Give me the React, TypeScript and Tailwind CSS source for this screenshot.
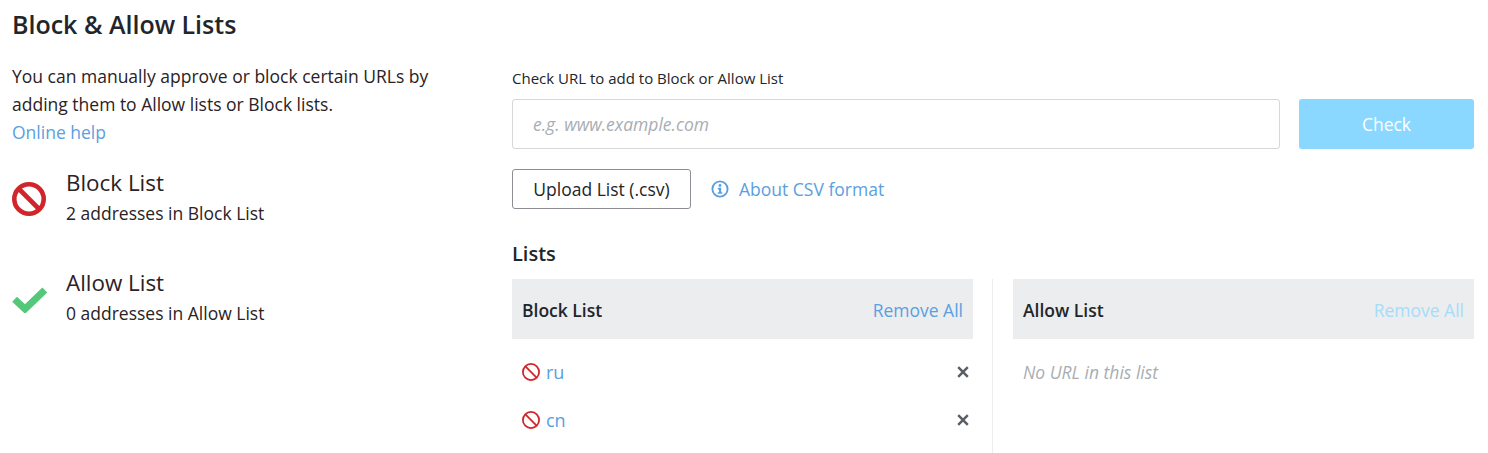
const font = { fontFamily: '"Open Sans", sans-serif' };

const BlockIcon = ({ size, stroke }: { size: number; stroke: number }) => (
  <svg width={size} height={size} viewBox="0 0 34 34" fill="none" className="shrink-0">
    <circle cx="17" cy="17" r={17 - stroke / 2} stroke="#d0262b" strokeWidth={stroke} />
    <path d="M6 6L28 28" stroke="#d0262b" strokeWidth={stroke} />
  </svg>
);

const CheckIcon = () => (
  <svg width="36" height="28" viewBox="0 0 36 28" fill="none">
    <path d="M2.6 14.2L13 24L32.8 5" stroke="#52c878" strokeWidth="7" strokeLinejoin="miter" strokeLinecap="butt" />
  </svg>
);

const InfoIcon = () => (
  <svg width="18" height="18" viewBox="0 0 18 18" fill="none">
    <circle cx="9" cy="9" r="7.6" stroke="#5aa0e0" strokeWidth="1.9" />
    <circle cx="9" cy="5.5" r="1.4" fill="#5aa0e0" />
    <path d="M6.8 7.8H10.2V12.2H11.2V13.8H6.8V12.2H8V9.4H6.8Z" fill="#5aa0e0" />
  </svg>
);

const CloseIcon = () => (
  <svg width="12" height="12" viewBox="0 0 12 12" fill="none">
    <path d="M1.2 1.2L10.8 10.8M10.8 1.2L1.2 10.8" stroke="#5b5e63" strokeWidth="2.5" />
  </svg>
);

const Summary = ({ icon, title, count }: { icon: React.ReactNode; title: string; count: string }) => (
  <div className="flex items-center h-[61px]">
    <div className="w-[54px] flex items-center">{icon}</div>
    <div>
      <div className="text-[22.4px] leading-[30px] text-[#2a2225]">{title}</div>
      <div className="text-[17.5px] leading-[31px] text-[#2a2225]">{count}</div>
    </div>
  </div>
);

const Row = ({ name }: { name: string }) => (
  <div className="flex items-center justify-between h-[48px] pl-[10px] pr-[4px]">
    <div className="flex items-center gap-[6px] text-[18px] text-[#5aa0e0]">
      <BlockIcon size={18} stroke={3.4} />
      <span className="leading-[24px]">{name}</span>
    </div>
    <CloseIcon />
  </div>
);

const App = () => {
  return (
    <div className="w-[1488px] h-[453px] overflow-hidden bg-white px-3 text-[#22252a]" style={font}>
      <h1 className="text-[25px] leading-[32px] font-semibold pt-[8px] h-[62px] text-[#22252a]">Block &amp; Allow Lists</h1>
      <div className="flex">
        <div className="w-[500px] shrink-0">
          <p className="text-[17.5px] leading-[28px] text-[#2a2225] w-[440px]">
            You can manually approve or block certain URLs by adding them to Allow lists or Block lists.
            <br />
            <a className="text-[#5aa0e0]">Online help</a>
          </p>
          <div className="flex flex-col gap-[39px] mt-[22px]">
            <Summary icon={<BlockIcon size={34} stroke={4.6} />} title="Block List" count="2 addresses in Block List" />
            <Summary icon={<CheckIcon />} title="Allow List" count="0 addresses in Allow List" />
          </div>
        </div>
        <div className="w-[962px]">
          <div className="text-[15px] leading-[20px] mb-[11px] mt-[6px]">Check URL to add to Block or Allow List</div>
          <div className="flex gap-[19px]">
            <div className="flex-1 h-[50px] border border-[#d5d7da] rounded-[3px] flex items-center pl-[20px] text-[17.5px] italic text-[#a9adb3]">
              e.g. www.example.com
            </div>
            <button className="w-[175px] h-[50px] bg-[#8ad8ff] rounded-[3px] text-white text-[17.5px]">Check</button>
          </div>
          <div className="flex items-center mt-[20px]">
            <button className="w-[179px] h-[40px] border border-[#8b8e93] rounded-[3px] text-[17.5px] text-[#22252a]">Upload List (.csv)</button>
            <div className="flex items-center ml-[20px] gap-[10px] text-[17.5px] text-[#5aa0e0]">
              <InfoIcon />
              <span>About CSV format</span>
            </div>
          </div>
          <h2 className="text-[20px] leading-[28px] font-semibold mt-[31px] mb-[11px]">Lists</h2>
          <div className="flex">
            <div className="w-[461px]">
              <div className="h-[60px] pt-[2px] bg-[#ecedef] flex items-center justify-between px-[10px]">
                <span className="text-[17.5px] font-semibold">Block List</span>
                <span className="text-[17.5px] text-[#5aa0e0]">Remove All</span>
              </div>
              <div className="pt-[9px]">
                <Row name="ru" />
                <Row name="cn" />
              </div>
            </div>
            <div className="w-[1px] ml-[19px] h-[175px] bg-[#ecedef]" />
            <div className="w-[461px] ml-[20px]">
              <div className="h-[60px] pt-[2px] bg-[#ecedef] flex items-center justify-between px-[10px]">
                <span className="text-[17.5px] font-semibold">Allow List</span>
                <span className="text-[17.5px] text-[#a6dcfa]">Remove All</span>
              </div>
              <div className="pl-[10px] h-[48px] flex items-center mt-[9px] text-[17.5px] italic text-[#a9adb3]">No URL in this list</div>
            </div>
          </div>
        </div>
      </div>
    </div>
  );
};

export default App;
